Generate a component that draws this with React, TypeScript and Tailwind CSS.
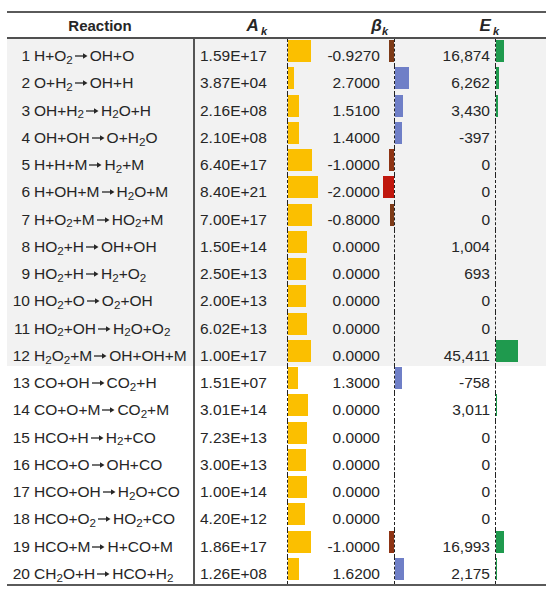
import React from 'react';

interface Reaction {
  n: number;
  eq: string;
  a: string;
  beta: number;
  e: number;
}

const reactions: Reaction[] = [
  { n: 1, eq: 'H+O2→OH+O', a: '1.59E+17', beta: -0.927, e: 16874 },
  { n: 2, eq: 'O+H2→OH+H', a: '3.87E+04', beta: 2.7, e: 6262 },
  { n: 3, eq: 'OH+H2→H2O+H', a: '2.16E+08', beta: 1.51, e: 3430 },
  { n: 4, eq: 'OH+OH→O+H2O', a: '2.10E+08', beta: 1.4, e: -397 },
  { n: 5, eq: 'H+H+M→H2+M', a: '6.40E+17', beta: -1.0, e: 0 },
  { n: 6, eq: 'H+OH+M→H2O+M', a: '8.40E+21', beta: -2.0, e: 0 },
  { n: 7, eq: 'H+O2+M→HO2+M', a: '7.00E+17', beta: -0.8, e: 0 },
  { n: 8, eq: 'HO2+H→OH+OH', a: '1.50E+14', beta: 0, e: 1004 },
  { n: 9, eq: 'HO2+H→H2+O2', a: '2.50E+13', beta: 0, e: 693 },
  { n: 10, eq: 'HO2+O→O2+OH', a: '2.00E+13', beta: 0, e: 0 },
  { n: 11, eq: 'HO2+OH→H2O+O2', a: '6.02E+13', beta: 0, e: 0 },
  { n: 12, eq: 'H2O2+M→OH+OH+M', a: '1.00E+17', beta: 0, e: 45411 },
  { n: 13, eq: 'CO+OH→CO2+H', a: '1.51E+07', beta: 1.3, e: -758 },
  { n: 14, eq: 'CO+O+M→CO2+M', a: '3.01E+14', beta: 0, e: 3011 },
  { n: 15, eq: 'HCO+H→H2+CO', a: '7.23E+13', beta: 0, e: 0 },
  { n: 16, eq: 'HCO+O→OH+CO', a: '3.00E+13', beta: 0, e: 0 },
  { n: 17, eq: 'HCO+OH→H2O+CO', a: '1.00E+14', beta: 0, e: 0 },
  { n: 18, eq: 'HCO+O2→HO2+CO', a: '4.20E+12', beta: 0, e: 0 },
  { n: 19, eq: 'HCO+M→H+CO+M', a: '1.86E+17', beta: -1.0, e: 16993 },
  { n: 20, eq: 'CH2O+H→HCO+H2', a: '1.26E+08', beta: 1.62, e: 2175 },
];

const Arrow = () => (
  <svg width="14" height="8" viewBox="0 0 14 8" className="mr-[2px] ml-[1px] inline-block align-[1px]">
    <line x1="1" y1="4" x2="10" y2="4" stroke="#262626" strokeWidth="1.3" />
    <polygon points="9,1.2 13.5,4 9,6.8" fill="#262626" />
  </svg>
);

// digits after a letter are subscripts
const Formula: React.FC<{ eq: string }> = ({ eq }) => {
  const parts: React.ReactNode[] = [];
  eq.split('').forEach((ch, i) => {
    if (/[0-9]/.test(ch)) parts.push(<sub key={i}>{ch}</sub>);
    else if (ch === '→') parts.push(<Arrow key={i} />);
    else parts.push(<span key={i}>{ch}</span>);
  });
  return <>{parts}</>;
};

const aWidth = (a: string) => 1.37 * Math.log10(parseFloat(a)) - 0.3;
const fmtE = (e: number) => e.toLocaleString('en-US');
const negColor = (b: number) => (b <= -1.5 ? '#c0170d' : b <= -0.95 ? '#8e3414' : '#7d3a17');

const Row: React.FC<{ r: Reaction; shaded: boolean }> = ({ r, shaded }) => {
  const txt = 'pt-[8px] leading-[18px]';
  return (
    <div className={`flex h-[27.25px] ${shaded ? 'bg-[#f2f2f2]' : 'bg-white'}`}>
      <div className={`w-[23px] text-right ${txt}`}>{r.n}</div>
      <div className={`w-[163px] pl-[4px] whitespace-nowrap ${txt}`}>
        <Formula eq={r.eq} />
      </div>
      <div className="w-[2px] bg-[#555]" />
      <div className={`w-[92px] pl-[5px] ${txt}`}>{r.a}</div>
      <div className="flex w-[107px] border-l border-dashed border-[#222]">
        <div className="mt-[1px] h-[22px] bg-[#fbbf00]" style={{ width: aWidth(r.a) }} />
        <div className={`flex-1 text-right ${txt}`}>{r.beta.toFixed(4)}</div>
        <div className="flex w-[14px] justify-end">
          {r.beta < 0 && (
            <div className="mt-[1px] h-[22px]" style={{ width: -r.beta * 5.3, background: negColor(r.beta) }} />
          )}
        </div>
      </div>
      <div className="flex w-[101px] border-l border-dashed border-[#222]">
        {r.beta > 0 && (
          <div className="mt-[1px] h-[22px] bg-[#6f7fc7]" style={{ width: r.beta * 5.3 }} />
        )}
        <div className={`flex-1 pr-[5px] text-right ${txt}`}>{fmtE(r.e)}</div>
      </div>
      <div className="flex-1 border-l border-dashed border-[#222]">
        {r.e > 2000 && (
          <div className="mt-[1px] h-[22px] bg-[#1f9a4e]" style={{ width: r.e * 4.8e-4 }} />
        )}
      </div>
    </div>
  );
};

export default function App() {
  return (
    <div className="h-[598px] w-[550px] bg-white px-[7px] pt-[11px] text-[15.5px] text-[#262626] font-['Liberation_Sans',Arial,sans-serif]">
      <div className="w-[539px] border-y-2 border-[#5a5a5a]">
        <div className="flex h-[26px] items-center border-b-2 border-[#505050] pt-[2px] font-bold">
          <div className="w-[186px] text-center text-[15px]">Reaction</div>
          <div className="w-[74px] text-right italic">
            <span className="text-[17px]">A</span>
            <span className="relative top-[4px] ml-[2px] text-[11px]">k</span>
          </div>
          <div className="w-[121px] text-right italic">
            <span className="text-[17px]">β</span>
            <span className="relative top-[4px] text-[11px]">k</span>
          </div>
          <div className="w-[111px] text-right italic">
            <span className="text-[17px]">E</span>
            <span className="relative top-[4px] ml-[2px] text-[11px]">k</span>
          </div>
        </div>
        {reactions.map((r, i) => (
          <Row key={r.n} r={r} shaded={i < 12} />
        ))}
      </div>
    </div>
  );
}
